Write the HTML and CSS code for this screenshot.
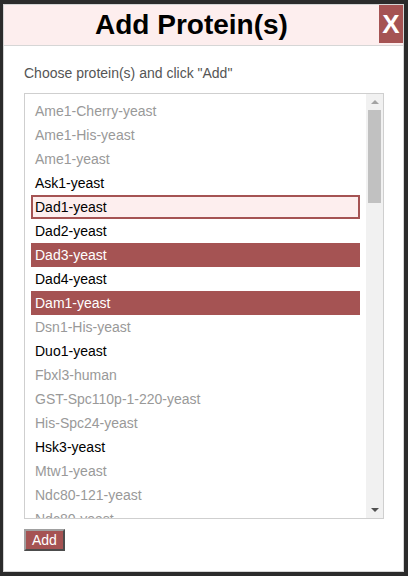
FILE: index.html
```html
<!DOCTYPE html>
<html>
<head>
<meta charset="utf-8">
<link rel="stylesheet" href="styles.css">
</head>
<body>
<div class="modal">
  <div class="header">
    <div class="title">Add Protein(s)</div>
    <div class="close">X</div>
  </div>
  <div class="content">
    <div class="hint">Choose protein(s) and click "Add"</div>
    <div class="listbox">
      <div class="options">
        <div class="opt dim">Ame1-Cherry-yeast</div>
        <div class="opt dim">Ame1-His-yeast</div>
        <div class="opt dim">Ame1-yeast</div>
        <div class="opt">Ask1-yeast</div>
        <div class="opt focus">Dad1-yeast</div>
        <div class="opt">Dad2-yeast</div>
        <div class="opt sel">Dad3-yeast</div>
        <div class="opt">Dad4-yeast</div>
        <div class="opt sel">Dam1-yeast</div>
        <div class="opt dim">Dsn1-His-yeast</div>
        <div class="opt">Duo1-yeast</div>
        <div class="opt dim">Fbxl3-human</div>
        <div class="opt dim">GST-Spc110p-1-220-yeast</div>
        <div class="opt dim">His-Spc24-yeast</div>
        <div class="opt">Hsk3-yeast</div>
        <div class="opt dim">Mtw1-yeast</div>
        <div class="opt dim">Ndc80-121-yeast</div>
        <div class="opt dim">Ndc80-yeast</div>
      </div>
      <div class="scrollbar">
        <div class="sb-btn"><span class="tri-up"></span></div>
        <div class="sb-track"><div class="sb-thumb"></div></div>
        <div class="sb-btn"><span class="tri-down"></span></div>
      </div>
    </div>
    <div class="actions">
      <button class="add">Add</button>
    </div>
  </div>
</div>
</body>
</html>
```

FILE: styles.css
```css
html, body {
  margin: 0;
  padding: 0;
  background: #2b2b2b;
  height: 576px;
  overflow: hidden;
}
body {
  padding: 4px 0 0 3px;
  box-sizing: border-box;
  font-family: "Liberation Sans", Arial, sans-serif;
}
.modal {
  width: 401px;
  height: 568px;
  box-sizing: border-box;
  border: 1px solid #d4d4d4;
  background: #fff;
  display: flex;
  flex-direction: column;
}
.header {
  height: 40px;
  background: #fdeeee;
  border-bottom: 1px solid #d6d6d6;
  display: flex;
  align-items: flex-start;
}
.title {
  flex: 1;
  text-align: center;
  font-weight: bold;
  font-size: 28px;
  line-height: 40px;
  color: #000;
}
.close {
  width: 24px;
  height: 38px;
  background: #a55353;
  color: #fff;
  font-weight: bold;
  font-size: 26px;
  line-height: 38px;
  text-align: center;
}
.content {
  padding: 17px 19px 0 20px;
  display: flex;
  flex-direction: column;
}
.hint {
  font-size: 14px;
  line-height: 20px;
  color: #555;
}
.listbox {
  margin-top: 10px;
  height: 426px;
  box-sizing: border-box;
  border: 1px solid #cfcfcf;
  display: flex;
  overflow: hidden;
}
.options {
  flex: 1;
  padding: 5px 6px 0 6px;
  overflow: hidden;
}
.opt {
  height: 20px;
  line-height: 20px;
  border: 2px solid transparent;
  padding: 0 2px;
  font-size: 14px;
  color: #000;
  white-space: nowrap;
}
.opt.dim {
  color: #999;
}
.opt.focus {
  border-color: #a55353;
  background: #fdeeee;
}
.opt.sel {
  background: #a55353;
  border-color: #a55353;
  color: #fff;
}
.scrollbar {
  width: 17px;
  background: #f1f1f1;
  display: flex;
  flex-direction: column;
}
.sb-btn {
  height: 16px;
  display: flex;
  align-items: center;
  justify-content: center;
}
.tri-up {
  width: 0;
  height: 0;
  border-left: 4px solid transparent;
  border-right: 4px solid transparent;
  border-bottom: 4px solid #a3a3a3;
}
.tri-down {
  width: 0;
  height: 0;
  border-left: 4px solid transparent;
  border-right: 4px solid transparent;
  border-top: 4px solid #505050;
}
.sb-track {
  flex: 1;
  padding: 0 2px;
}
.sb-thumb {
  height: 93px;
  background: #c1c1c1;
}
.actions {
  margin-top: 10px;
  display: flex;
}
.add {
  margin: 0;
  font-family: "Liberation Sans", Arial, sans-serif;
  font-size: 14px;
  line-height: 18px;
  height: 22px;
  padding: 0 6px;
  background: #a55353;
  color: #fff;
  border: 2px outset #a0a0a0;
}
```
